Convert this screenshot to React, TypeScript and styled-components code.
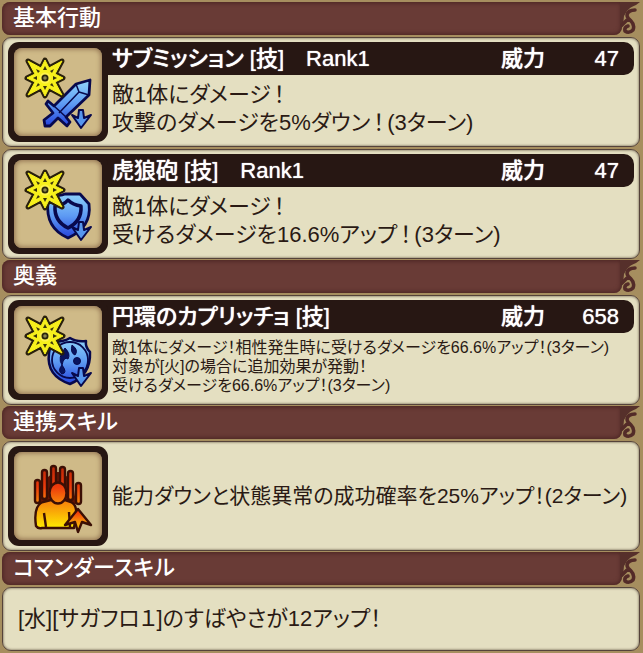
import React from 'react';
import styled, { createGlobalStyle } from 'styled-components';

const GlobalStyle = createGlobalStyle`
  * { box-sizing: border-box; }
  body {
    margin: 0;
    background: #a68e5f;
    color: #2a1a14;
    font-family: "Liberation Sans", "Noto Sans CJK JP", sans-serif;
    font-feature-settings: "palt";
  }
`;

const Page = styled.main`
  display: flex;
  flex-direction: column;
  gap: 1px;
  padding: 2px 3px 2px 2px;
`;

const Section = styled.section`
  display: flex;
  flex-direction: column;
  gap: 2px;
`;

const Heading = styled.header`
  display: flex;
  height: 33px;
`;

const HeadingTitle = styled.h2`
  flex: 1;
  margin: 0;
  padding-left: 11px;
  border-radius: 8px 0 8px 8px;
  background: #693b36;
  box-shadow: inset 0 0 4px 1px #4a2322;
  color: #fff;
  font-size: 22px;
  font-weight: 500;
  line-height: 32px;
`;

const Flourish = styled.svg`
  width: 20px;
  height: 33px;
  margin-left: -2px;
`;

const Panel = styled.article`
  display: flex;
  min-height: 64px;
  padding: 4px 5px;
  border: 1px solid #55433a;
  border-radius: 9px;
  background: #e4dfc1;
  box-shadow: inset 0 0 2px 1px #a59b83;
`;

const IconFrame = styled.div`
  position: relative;
  z-index: 1;
  flex: none;
  width: 100px;
  height: 100px;
  padding: 6px;
  border-radius: 11px;
  background: #271713;
`;

const IconTile = styled.div`
  width: 88px;
  height: 88px;
  border-radius: 8px;
  background: #cfba88;
  box-shadow: inset 0 0 5px 1px #8f704f;
`;

const Drawing = styled.svg`
  display: block;
  width: 88px;
  height: 88px;
`;

const Details = styled.div`
  flex: 1;
  min-width: 0;
`;

const NameBar = styled.div`
  display: flex;
  justify-content: space-between;
  height: 33px;
  margin-left: -12px;
  padding: 0 15px 0 16px;
  border-radius: 0 10px 10px 0;
  background: #271713;
  color: #fff;
  font-size: 22px;
  line-height: 33px;
  text-shadow: 0 0 1px #fff;
`;

const SkillName = styled.h3`
  margin: 0;
  font: inherit;
  font-weight: 500;
  white-space: pre;
`;

const Power = styled.div`
  display: flex;
  justify-content: space-between;
  width: 118px;
  font-weight: 500;
`;

const Description = styled.p<{ $small?: boolean }>`
  margin: 0;
  padding: ${(p) => (p.$small ? '5px' : '6px')} 0 0 4px;
  font-size: ${(p) => (p.$small ? '16px' : '22px')};
  line-height: ${(p) => (p.$small ? '19px' : '28px')};
  white-space: pre-line;
`;

const SoloText = styled.p<{ $indent: number; $compact?: boolean }>`
  align-self: center;
  margin: 0;
  padding-left: ${(p) => p.$indent}px;
  font-size: ${(p) => (p.$compact ? '21px' : '22px')};
  line-height: 28px;
`;

const Mark = styled.span`
  padding: 0 3px;
`;

const SpacedText = ({ text }: { text: string }) => (
  <>
    {text.split(/(！)/).map((part, i) =>
      part === '！' ? <Mark key={i}>！</Mark> : <React.Fragment key={i}>{part}</React.Fragment>,
    )}
  </>
);

type IconKind = 'sword' | 'shield' | 'orb' | 'hand';

const Burst = () => (
  <g>
    <path d="M20 19 L33 26 L37 18 L41 26 L54 19 L47 32 L55 36 L47 40 L54 53 L41 46 L37 54 L33 46 L20 53 L27 40 L19 36 L27 32Z" fill="#f7f01c" stroke="#29200c" strokeWidth="5" strokeLinejoin="round" />
    <path d="M20 19 L33 26 L37 18 L41 26 L54 19 L47 32 L55 36 L47 40 L54 53 L41 46 L37 54 L33 46 L20 53 L27 40 L19 36 L27 32Z" fill="#f7f01c" stroke="#f7f01c" strokeWidth="1" />
    <path d="M37 24l2 4h-4zM37 48l2-4h-4zM25 36l4-2v4zM49 36l-4-2v4zM28 27l4 2-2 2zM46 27l-4 2 2 2zM28 45l4-2-2-2zM46 45l-4-2 2-2z" fill="#3a330c" />
    <circle cx="37" cy="36" r="4.5" fill="#2b260c" stroke="#fff34a" strokeWidth="2" />
    <circle cx="37" cy="36" r="1.8" fill="#8d8750" />
  </g>
);

const DownArrow = () => (
  <path d="M71 68 L75 68 L76 76 L83 73 L73 86 L64 73 L70 76Z" fill="#5796ee" stroke="#08094d" strokeWidth="2" strokeLinejoin="round" />
);

const SkillIcon = ({ kind }: { kind: IconKind }) => (
  <IconFrame>
    <IconTile>
      <Drawing viewBox="6 6 88 88" aria-hidden="true">
        <defs>
          <linearGradient id={`blue-${kind}`} gradientUnits="userSpaceOnUse" x1="0" y1="40" x2="0" y2="84">
            <stop offset="0" stopColor="#8dd1fa" />
            <stop offset="0.5" stopColor="#5d9af3" />
            <stop offset="1" stopColor="#2442dc" />
          </linearGradient>
          <linearGradient id={`fire-${kind}`} gradientUnits="userSpaceOnUse" x1="0" y1="18" x2="0" y2="84">
            <stop offset="0" stopColor="#b52305" />
            <stop offset="0.35" stopColor="#ee3b0c" />
            <stop offset="0.6" stopColor="#f78a0a" />
            <stop offset="1" stopColor="#fff200" />
          </linearGradient>
          <linearGradient id={`flame-${kind}`} x1="0" y1="0" x2="0" y2="1">
            <stop offset="0" stopColor="#f01c08" />
            <stop offset="0.5" stopColor="#f98a0a" />
            <stop offset="1" stopColor="#ffe000" />
          </linearGradient>
        </defs>
        {kind === 'sword' && (
          <g fill={`url(#blue-${kind})`} stroke="#08094d" strokeWidth="2.8" strokeLinejoin="round">
            <path d="M46 64 L68 42 L82 38 L81 53 L58 75 L62 80 L59 84 L50 76 L42 84 L37 84 L36 78 L45 71 L38 62 L40 59Z" />
            <path d="M68 42 L71 50 L81 53 M71 50 L51 71 M46 64 L58 75" fill="none" strokeWidth="1.5" />
          </g>
        )}
        {kind === 'shield' && (
          <g fill={`url(#blue-${kind})`} stroke="#08094d" strokeWidth="2.8" strokeLinejoin="round">
            <path d="M43 42 Q52 42 57 40 L72 40 L81 50 Q84 73 60 84 Q37 74 40 48Z" />
            <path d="M47 52 Q56 51 60 46 Q65 51 73 52 Q74 67 60 74 Q46 67 47 52Z" strokeWidth="3.5" />
          </g>
        )}
        {kind === 'orb' && (
          <g fill={`url(#blue-${kind})`} stroke="#08094d" strokeWidth="2.5" strokeLinejoin="round">
            <path d="M43 42 Q56 42 62 38 Q68 42 78 41 Q77 47 82 52 Q83 75 62 84 Q38 76 41 53Z" />
            <circle cx="62" cy="60" r="18" strokeWidth="1.8" />
            <path d="M57 48 Q63 54 60 59 Q56 56 54 65 Q49 58 57 48Z M64 45 Q71 50 67 55 Q62 53 64 45Z M54 65 Q60 73 54 74 Q49 71 54 65Z" fill="#09145f" strokeWidth="1" />
            <circle cx="69" cy="61" r="3.5" fill="#09145f" strokeWidth="1" />
          </g>
        )}
        {kind !== 'hand' && <DownArrow />}
        {kind !== 'hand' && <Burst />}
        {kind === 'hand' && (
          <g stroke="#3b0f05" strokeWidth="2.4" strokeLinejoin="round" fill={`url(#fire-${kind})`}>
            <path d="M31 58 L34 36 L46 26 L54 26 L65 36 L68 58Z" fill="#631505" stroke="none" />
            <rect x="27" y="34" width="5" height="23" rx="2.5" />
            <rect x="34" y="24" width="5" height="29" rx="2.5" />
            <rect x="43" y="20" width="5" height="26" rx="2.5" />
            <rect x="52" y="21" width="5" height="26" rx="2.5" />
            <rect x="60" y="25" width="5" height="29" rx="2.5" />
            <rect x="68" y="37" width="5" height="21" rx="2.5" />
            <path d="M28 80 Q25 60 35 56 L43 54 L57 54 L63 56 Q69 59 68 68 L66 82 L34 82 Q30 83 28 80Z" />
            <path d="M36 67 L38 81 M61 66 L62 81" fill="none" />
            <ellipse cx="50" cy="47" rx="8.5" ry="10.5" />
            <path d="M70 63 L83 79 L74 76 L70 86 L67 76 L57 79Z" fill={`url(#flame-${kind})`} />
          </g>
        )}
      </Drawing>
    </IconTile>
  </IconFrame>
);

const SectionHeading = ({ children }: { children: React.ReactNode }) => (
  <Heading>
    <HeadingTitle>{children}</HeadingTitle>
    <Flourish viewBox="0 0 20 33" aria-hidden="true">
      <path d="M0 0 H20 L16 3 Q10 5 7 9 L4 14 L3 24 L0 28Z" fill="#56302b" />
      <path d="M15 8 Q8 8 7 13 Q7 16 11 19 Q15 23 13 28 Q9 32 5 29 Q4 25 8 24 M8 17 Q5 20 2 23" fill="none" stroke="#532b28" strokeWidth="3.5" strokeLinecap="round" />
    </Flourish>
  </Heading>
);

interface SkillProps {
  icon: IconKind;
  name: string;
  power: number;
  text: string;
  small?: boolean;
}

const Skill = ({ icon, name, power, text, small }: SkillProps) => (
  <Panel>
    <SkillIcon kind={icon} />
    <Details>
      <NameBar>
        <SkillName>{name}</SkillName>
        <Power>
          <span>威力</span>
          <span>{power}</span>
        </Power>
      </NameBar>
      <Description $small={small}>{small ? text : <SpacedText text={text} />}</Description>
    </Details>
  </Panel>
);

export default function App() {
  return (
    <>
      <GlobalStyle />
      <Page lang="ja">
        <Section>
          <SectionHeading>基本行動</SectionHeading>
          <Skill icon="sword" name={'サブミッション [技]　Rank1'} power={47} text={'敵1体にダメージ！\n攻撃のダメージを5%ダウン！(3ターン)'} />
          <Skill icon="shield" name={'虎狼砲 [技]　Rank1'} power={47} text={'敵1体にダメージ！\n受けるダメージを16.6%アップ！(3ターン)'} />
        </Section>
        <Section>
          <SectionHeading>奥義</SectionHeading>
          <Skill icon="orb" name="円環のカプリッチョ [技]" power={658} small text={'敵1体にダメージ！相性発生時に受けるダメージを66.6%アップ！(3ターン)\n対象が[火]の場合に追加効果が発動！\n受けるダメージを66.6%アップ！(3ターン)'} />
        </Section>
        <Section>
          <SectionHeading>連携スキル</SectionHeading>
          <Panel>
            <SkillIcon kind="hand" />
            <SoloText $indent={4} $compact>能力ダウンと状態異常の成功確率を25%アップ！(2ターン)</SoloText>
          </Panel>
        </Section>
        <Section>
          <SectionHeading>コマンダースキル</SectionHeading>
          <Panel>
            <SoloText $indent={10}>[水][サガフロ１]のすばやさが12アップ！</SoloText>
          </Panel>
        </Section>
      </Page>
    </>
  );
}
